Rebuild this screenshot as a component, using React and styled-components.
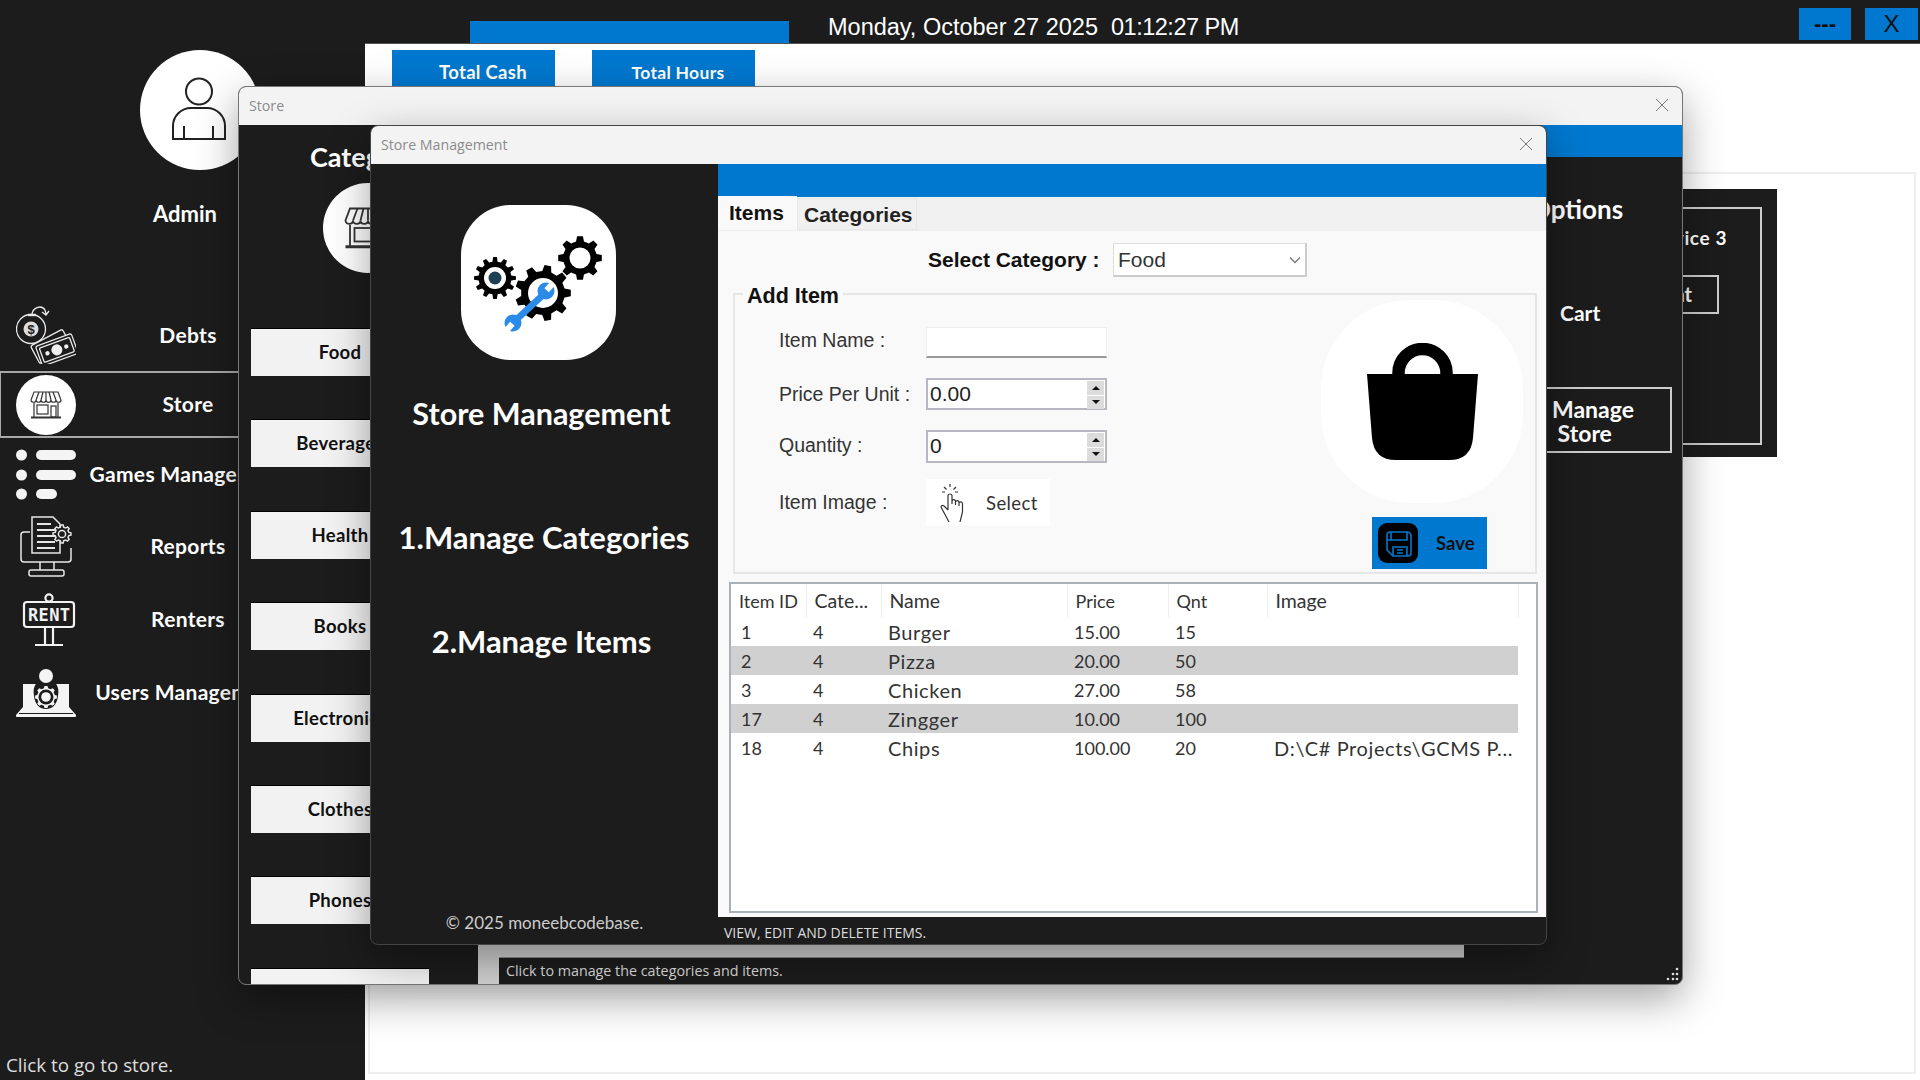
import React from 'react';
import styled, { createGlobalStyle } from 'styled-components';

const GOTHIC = '"Lato", "Open Sans", sans-serif';
const ARIAL = '"Liberation Sans", Arial, sans-serif';
const SOFT = '"Open Sans", "Noto Sans", sans-serif';
const BLUE = '#0078cf';
const DARK = '#1c1c1c';

const GlobalStyle = createGlobalStyle`
	html, body {
		margin: 0;
		padding: 0;
		background: ${DARK};
	}
	* {
		box-sizing: border-box;
	}
`;

const Desktop = styled.div`
	position: relative;
	width: 1920px;
	height: 1080px;
	overflow: hidden;
	background: ${DARK};
	display: grid;
	grid-template-columns: 365px 1fr;
	grid-template-rows: 44px 1fr;
`;

const TopBar = styled.header`
	grid-column: 1 / 3;
	display: flex;
	align-items: flex-start;
	padding-left: 470px;
`;

const TopStrip = styled.div`
	width: 319px;
	height: 23px;
	margin-top: 21px;
	background: ${BLUE};
`;

const DateText = styled.div`
	margin: 12px 0 0 39px;
	font: 23.5px/30px ${ARIAL};
	color: #fff;
	white-space: pre;
`;

const TimeText = styled.span`
	letter-spacing: -0.5px;
`;

const WinButtons = styled.div`
	display: flex;
	gap: 14px;
	margin: 8px 2px 0 auto;
`;

const WinButton = styled.div`
	width: ${(p) => (p.$wide ? 52 : 53)}px;
	height: 32px;
	background: ${BLUE};
	color: #111;
	font: ${(p) => (p.$wide ? '700 22px' : '400 24px')}/32px ${ARIAL};
	text-align: center;
`;

const Sidebar = styled.aside`
	display: flex;
	flex-direction: column;
	color: #fff;
	font-family: ${GOTHIC};
`;

const Avatar = styled.div`
	width: 120px;
	height: 120px;
	margin: 6px 0 0 140px;
	border-radius: 50%;
	background: #fff;
`;

const AdminName = styled.div`
	margin: 30px 0 0 153px;
	font-size: 22px;
	line-height: 28px;
	font-weight: 700;
`;

const Nav = styled.nav`
	margin-top: 72px;
	display: flex;
	flex-direction: column;
`;

const NavRow = styled.div`
	display: flex;
	align-items: center;
	height: ${(p) => p.$h}px;
	padding-left: 16px;
	${(p) =>
		p.$active &&
		`border: 2px solid #a8a8a8; border-right: none; border-left-width: 1px; padding-left: 15px;`}
`;

const NavIcon = styled.div`
	width: 60px;
	height: 60px;
	flex: none;
	display: flex;
	align-items: center;
	justify-content: center;
	padding-left: ${(p) => p.$shift || 0}px;
	padding-bottom: ${(p) => p.$lift || 0}px;
`;

const NavCircle = styled(NavIcon)`
	border-radius: 50%;
	background: #fff;
`;

const NavLabel = styled.span`
	width: 224px;
	padding-bottom: 3px;
	text-align: center;
	white-space: nowrap;
	font-size: 21px;
	font-weight: 700;
	letter-spacing: 0.3px;
`;

const Hint = styled.div`
	margin: auto 0 2px 6px;
	font: 18.8px/26px ${SOFT};
	color: #ddd;
`;

const Main = styled.main`
	margin-top: -1px;
	border-top: 1px solid #555;
	background: #fff;
	padding: 6px 4px 6px 3px;
	display: flex;
	flex-direction: column;
`;

const TotalTabs = styled.div`
	display: flex;
	gap: 37px;
	padding-left: 24px;
	height: 122px;
`;

const TotalTab = styled.div`
	width: 163px;
	height: 46px;
	padding-left: ${(p) => p.$pad}px;
	background: ${BLUE};
	color: #fff;
	font: 700 ${(p) => p.$size}px/45px ${GOTHIC};
	letter-spacing: 0.3px;
	text-align: center;
`;

const Panel = styled.section`
	flex: 1;
	display: flex;
	justify-content: flex-end;
	align-items: flex-start;
	padding: 15px 137px 0 0;
	border: 2px solid #eee;
`;

const DeviceCard = styled.div`
	width: 400px;
	height: 268px;
	padding: 18px 15px 12px 16px;
	background: ${DARK};
`;

const DeviceBox = styled.div`
	height: 100%;
	border: 2px solid #ccc;
	display: flex;
	flex-direction: column;
	align-items: flex-end;
	color: #fff;
	font-family: ${GOTHIC};
`;

const DeviceName = styled.div`
	margin: 18px 33px 0 0;
	font-size: 19px;
	line-height: 22px;
	font-weight: 700;
	letter-spacing: 0.6px;
`;

const DeviceAction = styled.div`
	width: 180px;
	height: 39px;
	margin: 26px 41px 0 0;
	border: 2px solid #ccc;
	padding-right: 25px;
	text-align: right;
	font-size: 20px;
	line-height: 35px;
	font-weight: 700;
`;

const Window = styled.div`
	position: absolute;
	left: ${(p) => p.$x}px;
	top: ${(p) => p.$y}px;
	width: ${(p) => p.$w}px;
	height: ${(p) => p.$h}px;
	display: flex;
	flex-direction: column;
	overflow: hidden;
	background: ${DARK};
	border-radius: 8px;
	border: 1px solid ${(p) => p.$edge};
	box-shadow: 0 14px 42px rgba(0, 0, 0, 0.36);
`;

const TitleBar = styled.div`
	flex: none;
	height: ${(p) => p.$h}px;
	display: flex;
	align-items: center;
	justify-content: space-between;
	padding: 0 13px 2px 10px;
	background: #f3f3f3;
	color: #8b8b8b;
	font: 14.2px ${SOFT};
`;

const StoreBody = styled.div`
	flex: 1;
	min-height: 0;
	display: flex;
`;

const CategoryColumn = styled.div`
	width: 239px;
	flex: none;
	overflow: hidden;
	display: flex;
	flex-direction: column;
	font-family: ${GOTHIC};
`;

const CategoryHeading = styled.div`
	margin: 16px 0 0 71px;
	color: #fff;
	font-size: 27px;
	line-height: 32px;
	font-weight: 700;
	white-space: nowrap;
`;

const CategoryCircle = styled.div`
	width: 90px;
	height: 90px;
	flex: none;
	margin: 10px 0 0 84px;
	border-radius: 50%;
	background: #fff;
	display: flex;
	align-items: center;
	justify-content: center;
`;

const CategoryList = styled.div`
	margin: 55px 0 0 12px;
	display: flex;
	flex-direction: column;
	gap: 43.4px;
`;

const CategoryButton = styled.div`
	width: 178px;
	height: 48px;
	flex: none;
	background: #f2f2f2;
	border-top: 1px solid #000;
	color: #111;
	font-size: 18.5px;
	line-height: 47px;
	font-weight: 700;
	letter-spacing: 0.3px;
	text-align: center;
	white-space: nowrap;
`;

const StoreRight = styled.div`
	flex: 1;
	display: flex;
	flex-direction: column;
`;

const BlueBar = styled.div`
	flex: none;
	height: ${(p) => p.$h}px;
	background: ${BLUE};
`;

const StoreColumns = styled.div`
	flex: 1;
	display: flex;
	min-height: 0;
`;

const MiddlePane = styled.div`
	width: 986px;
	padding-left: 21px;
	background: #cfcfcf;
	display: flex;
	flex-direction: column;
	justify-content: flex-end;
`;

const StoreStatus = styled.div`
	height: 27px;
	padding-left: 7px;
	background: ${DARK};
	border-top: 1px solid #888;
	color: #ddd;
	font: 14.3px/26px ${SOFT};
`;

const OptionsColumn = styled.div`
	flex: 1;
	display: flex;
	flex-direction: column;
	align-items: flex-start;
	color: #fff;
	font-family: ${GOTHIC};
`;

const OptionsHeading = styled.div`
	margin: 36px 0 0 66px;
	font-size: 26px;
	line-height: 32px;
	font-weight: 700;
`;

const CartLabel = styled.div`
	margin: 72px 0 0 96px;
	font-size: 21px;
	line-height: 32px;
	font-weight: 700;
`;

const ManageButton = styled.div`
	width: 158px;
	height: 66px;
	margin: 58px 0 0 50px;
	padding: 8px 0 0 36px;
	border: 2px solid #ccc;
	font-size: 23px;
	line-height: 24px;
	font-weight: 700;
	white-space: pre;
`;

const Grip = styled.svg`
	position: absolute;
	right: 2px;
	bottom: 2px;
`;

const ManageBody = styled.div`
	flex: 1;
	min-height: 0;
	display: grid;
	grid-template-columns: 347px 1fr;
`;

const ManageSide = styled.div`
	display: flex;
	flex-direction: column;
	align-items: center;
	padding: 41px 6px 11px 0;
	color: #fff;
	font-family: ${GOTHIC};
`;

const LogoTile = styled.div`
	width: 155px;
	height: 155px;
	margin-right: 6px;
	border-radius: 50px;
	background: #fff;
`;

const SideTitle = styled.div`
	margin-top: ${(p) => p.$top}px;
	padding-left: ${(p) => p.$nudge || 0}px;
	font-size: ${(p) => p.$size}px;
	line-height: 34px;
	font-weight: 700;
	white-space: nowrap;
`;

const Copyright = styled.div`
	margin-top: auto;
	padding-left: 6px;
	color: #ccc;
	font-size: 17px;
	line-height: 20px;
`;

const ManageMain = styled.div`
	display: flex;
	flex-direction: column;
	min-height: 0;
`;

const TabStrip = styled.div`
	flex: none;
	height: 34px;
	display: flex;
	align-items: flex-end;
	background: #f0f0f0;
	border-bottom: 1px solid #eee;
	font-family: ${ARIAL};
`;

const ActiveTab = styled.div`
	width: 79px;
	height: 34px;
	padding-left: 11px;
	background: #f9f9f9;
	color: #111;
	font-size: 21px;
	line-height: 33px;
	font-weight: 700;
`;

const IdleTab = styled.div`
	width: 120px;
	height: 32px;
	border: 1px solid #e8e8e8;
	padding-left: 6px;
	color: #222;
	font-size: 21px;
	line-height: 31px;
	font-weight: 700;
`;

const TabPanel = styled.div`
	flex: 1;
	min-height: 0;
	padding: 12px 8px 4px 11px;
	background: #f9f9f9;
	display: flex;
	flex-direction: column;
	font-family: ${ARIAL};
`;

const CategoryRow = styled.div`
	flex: none;
	height: 34px;
	display: flex;
	align-items: center;
	padding-left: 199px;
`;

const BoldLabel = styled.span`
	width: 185px;
	color: #111;
	font-size: 21px;
	font-weight: 700;
	white-space: nowrap;
`;

const SelectBox = styled.div`
	width: 194px;
	height: 34px;
	display: flex;
	align-items: center;
	justify-content: space-between;
	padding: 0 4px 0 4px;
	background: #fff;
	border: 1px solid #ddd;
	border-bottom: 2px solid #ccc;
	border-right: 2px solid #ccc;
	color: #333;
	font-size: 21px;
`;

const GroupBox = styled.fieldset`
	flex: none;
	height: 291.5px;
	margin: 5.5px 1px 0 4px;
	padding: 0;
	min-width: 0;
	border: 2px solid #e6e6e6;
	display: flex;
`;

const GroupLegend = styled.legend`
	margin-left: 8px;
	padding: 3px 4px 0;
	color: #111;
	font-size: 21.5px;
	line-height: 20px;
	font-weight: 700;
`;

const GroupRow = styled.div`
	width: 100%;
	display: flex;
	justify-content: space-between;
`;

const FormColumn = styled.div`
	padding: 21.5px 0 0 44px;
	display: flex;
	flex-direction: column;
	gap: 20px;
`;

const FormRow = styled.div`
	height: ${(p) => p.$h}px;
	margin-top: ${(p) => p.$shift || 0}px;
	display: flex;
	align-items: center;
`;

const FormLabel = styled.span`
	width: 147px;
	padding-bottom: ${(p) => (p.$up || 0) * 2}px;
	color: #333;
	font-size: 19.5px;
	white-space: nowrap;
`;

const TextInput = styled.div`
	width: 181px;
	height: 100%;
	background: #fff;
	border: 1px solid #eee;
	border-bottom: 2px solid #999;
`;

const NumberInput = styled.div`
	position: relative;
	width: 181px;
	height: 100%;
	padding-left: 2px;
	background: #fff;
	border: 2px solid #b8b8c4;
	color: #222;
	font-size: 21px;
	line-height: 28px;
`;

const Spinner = styled.div`
	position: absolute;
	top: 1px;
	right: 1px;
	width: 17px;
	display: flex;
	flex-direction: column;
	gap: 1px;
`;

const SpinPart = styled.div`
	height: 13.5px;
	background: #dcdcdc;
	display: flex;
	align-items: center;
	justify-content: center;
	&::after {
		content: '';
		border-left: 4px solid transparent;
		border-right: 4px solid transparent;
		${(p) => (p.$down ? 'border-top' : 'border-bottom')}: 4px solid #111;
	}
`;

const ImageButton = styled.div`
	width: 124px;
	height: 100%;
	display: flex;
	align-items: center;
	padding-left: 14px;
	background: #fff;
	color: #333;
	font: 18.5px ${GOTHIC};
	letter-spacing: 0.4px;
`;

const ImageButtonText = styled.span`
	margin-left: 20px;
`;

const BagColumn = styled.div`
	width: 214px;
	margin-top: -5.5px;
	display: flex;
	flex-direction: column;
`;

const BagTile = styled.div`
	width: 202px;
	height: 203px;
	border-radius: 44%;
	background: #fff;
	display: flex;
	align-items: center;
	justify-content: center;
`;

const SaveButton = styled.div`
	width: 115px;
	height: 52px;
	margin: 14px 0 0 51px;
	padding-left: 6px;
	background: ${BLUE};
	display: flex;
	align-items: center;
	color: #111;
	font: 700 18.5px ${GOTHIC};
`;

const SaveIcon = styled.div`
	width: 40px;
	height: 40px;
	border-radius: 9px;
	background: #000;
	margin-right: 18px;
`;

const TableFrame = styled.div`
	flex: none;
	height: 331px;
	margin-top: 8px;
	background: #fff;
	border: 2px solid #a9b0b8;
`;

const ItemTable = styled.table`
	table-layout: fixed;
	width: 787px;
	border-collapse: collapse;
	font-family: ${GOTHIC};
	font-size: 18px;
	color: #333;
`;

const HeadCell = styled.th`
	height: 33px;
	width: ${(p) => p.$w}px;
	padding: 0 0 0 8px;
	border-right: 1px solid #eee;
	font-weight: 400;
	font-size: ${(p) => (p.$wide ? 19.5 : 18)}px;
	text-align: left;
	white-space: nowrap;
`;

const BodyRow = styled.tr`
	background: ${(p) => (p.$alt ? '#d0d0d0' : '#fff')};
`;

const BodyCell = styled.td`
	height: 29px;
	padding: 0 0 0 ${(p) => (p.$first ? 10 : 7)}px;
	font-size: ${(p) => (p.$wide ? 20 : 18)}px;
	letter-spacing: ${(p) => (p.$wide ? 0.6 : 0)}px;
	white-space: nowrap;
	overflow: hidden;
`;

const ManageStatus = styled.div`
	flex: none;
	height: 27px;
	padding-left: 6px;
	color: #ddd;
	font: 14px/31px ${SOFT};
`;

const CloseIcon = () => (
	<svg width='14' height='14' viewBox='0 0 14 14'>
		<path d='M1 1l12 12M13 1L1 13' stroke='#777' strokeWidth='1' fill='none' />
	</svg>
);

const gearPath = (cx, cy, r, root, teeth) => {
	const step = (Math.PI * 2) / teeth;
	const at = (rad, a) =>
		`${(cx + rad * Math.cos(a)).toFixed(2)} ${(cy + rad * Math.sin(a)).toFixed(2)}`;
	let d = '';
	for (let i = 0; i < teeth; i++) {
		const a = i * step;
		d += `${i ? 'L' : 'M'}${at(root, a - step * 0.3)}L${at(r, a - step * 0.17)}L${at(r, a + step * 0.17)}L${at(root, a + step * 0.3)}`;
	}
	return d + 'Z';
};

const UserIcon = () => (
	<svg width='120' height='120' viewBox='0 0 120 120' fill='none' stroke='#222' strokeWidth='2'>
		<circle cx='59' cy='41.5' r='13' />
		<path d='M33 89V76a18 18 0 0 1 18-18h16a18 18 0 0 1 18 18v13z' />
		<path d='M44 76v13M73 76v13' />
	</svg>
);

const ShopIcon = ({ size = 32 }) => (
	<svg width={size} height={(size * 28) / 32} viewBox='0 0 32 28' fill='none' stroke='#333' strokeWidth='1.2'>
		<path d='M4 1h24l3 8c0 3-5 3-5 0 0 3-5 3-5 0 0 3-5 3-5 0 0 3-5 3-5 0 0 3-5 3-5 0 0 3-5 3-5 0z' />
		<path d='M9 1L6 9M13 1l-2 8M16 1v8M19 1l2 8M23 1l3 8' />
		<path d='M4 12v14M28 12v14' />
		<path d='M1 26.5h30' strokeWidth='2' />
		<rect x='7' y='14' width='11' height='9' />
		<rect x='21' y='15' width='5' height='11' />
	</svg>
);

const DebtIcon = () => (
	<svg width='60' height='60' viewBox='0 0 60 60' fill='none' stroke='#e8e8e8' strokeWidth='1.3'>
		<circle cx='15' cy='25' r='14.5' />
		<circle cx='15' cy='25' r='7.5' fill='#ddd' stroke='none' />
		<text x='15' y='30' textAnchor='middle' fontSize='13' fontWeight='700' fill='#222' stroke='none' fontFamily='Liberation Sans'>
			$
		</text>
		<path d='M16 11c0-7 9-11 13-5l1 4M26 8l4 3 3-4' />
		<path d='M12 11h8' strokeWidth='2.4' />
		<g transform='rotate(-28 36 42)'>
			<rect x='17' y='32' width='36' height='20' rx='2' fill={DARK} />
		</g>
		<g transform='rotate(-20 42 46)'>
			<rect x='22' y='35' width='38' height='21' rx='2' fill={DARK} />
			<rect x='25' y='38' width='32' height='15' rx='1' />
			<circle cx='41' cy='45.5' r='5.5' fill='#eee' stroke='none' />
			<circle cx='31' cy='45.5' r='2.2' fill='#eee' stroke='none' />
			<circle cx='51' cy='45.5' r='2.2' fill='#eee' stroke='none' />
		</g>
	</svg>
);

const MenuIcon = () => (
	<svg width='60' height='52' viewBox='0 0 60 52' fill='#f4f4f4'>
		<circle cx='5.5' cy='6' r='5.5' />
		<rect x='20' y='1' width='40' height='10' rx='5' />
		<circle cx='5.5' cy='26' r='5.5' />
		<rect x='20' y='21' width='40' height='10' rx='5' />
		<circle cx='5.5' cy='45' r='5.5' />
		<rect x='20' y='40' width='21' height='10' rx='5' />
	</svg>
);

const ReportIcon = () => (
	<svg width='58' height='62' viewBox='0 0 58 62' fill='none' stroke='#e6e6e6' strokeWidth='1.5'>
		<path d='M12 16H6a3 3 0 0 0-3 3v24a3 3 0 0 0 3 3h44a3 3 0 0 0 3-3V32' />
		<path d='M22 46v8M36 46v8' />
		<rect x='11' y='54' width='35' height='6' rx='2' />
		<path d='M14 1h21l7 7v29H14z' fill={DARK} />
		<path d='M19 8h14M19 14h18M19 20h18M19 26h18M19 32h18' strokeWidth='1.8' />
		<path d={gearPath(44, 18, 9, 7, 8)} fill={DARK} />
		<circle cx='44' cy='18' r='3.6' />
	</svg>
);

const RentIcon = () => (
	<svg width='54' height='54' viewBox='0 0 54 54' fill='none' stroke='#f2f2f2' strokeWidth='2.2'>
		<circle cx='27' cy='5' r='3.6' />
		<rect x='2' y='9' width='50' height='25' rx='3' fill={DARK} />
		<text x='27' y='28' textAnchor='middle' fontSize='17' fontWeight='700' fill='#f2f2f2' stroke='none' fontFamily='DejaVu Sans Mono' textLength='42'>
			RENT
		</text>
		<path d='M23 34v17M31 34v17M13 52h28' />
	</svg>
);

const UsersIcon = () => (
	<svg width='60' height='50' viewBox='0 0 60 50' fill='none'>
		<rect x='7' y='16' width='46' height='26' fill='#f4f4f4' />
		<path d='M7 39L0 47a1.5 1.5 0 0 0 1 2h58a1.5 1.5 0 0 0 1-2l-7-8z' fill='#f4f4f4' />
		<path d='M3 45.5h54' stroke={DARK} strokeWidth='1' />
		<path d='M21 14c-3 5-4 7-3 14 1 9 6 13 12 13s11-4 12-13c1-7 0-9-3-14z' fill={DARK} />
		<path d={gearPath(30, 29, 11, 9, 8)} fill='#f4f4f4' />
		<circle cx='30' cy='29' r='7.5' fill={DARK} />
		<circle cx='30' cy='29' r='4.8' fill='#f4f4f4' />
		<circle cx='30' cy='8' r='7' fill='#f4f4f4' />
	</svg>
);

const LogoArt = () => (
	<svg width='155' height='155' viewBox='0 0 155 155'>
		<path d={gearPath(34, 73, 21, 16.5, 12)} fill='#000' />
		<circle cx='34' cy='73' r='11' fill='#fff' />
		<circle cx='34' cy='73' r='6.5' fill='#1f3f55' />
		<path d={gearPath(119, 53, 22, 17, 8)} fill='#000' />
		<circle cx='119' cy='53' r='10.5' fill='#fff' />
		<path d={gearPath(82, 88, 28, 22, 9)} fill='#000' />
		<circle cx='82' cy='88' r='15' fill='#fff' />
		<path d='M83 89L55 115' stroke='#2a8ce8' strokeWidth='6.5' />
		<circle cx='85' cy='86' r='8.5' fill='#2a8ce8' />
		<polygon points='83.4,83.3 87.9,87.2 94.5,79.7 90,75.8' fill='#fff' />
		<circle cx='52' cy='118' r='8.5' fill='#2a8ce8' />
		<polygon points='53.6,120.7 49.1,116.8 42.5,124.3 47,128.2' fill='#fff' />
	</svg>
);

const BagIcon = () => (
	<svg width='111' height='117' viewBox='0 0 111 117'>
		<path d='M31.5 33v-3a24 24 0 0 1 48 0v3' fill='none' stroke='#000' strokeWidth='12.5' />
		<path d='M0 31h111l-5 64q-2 22-24 22H29q-22 0-24-22z' fill='#000' />
	</svg>
);

const HandIcon = () => (
	<svg width='26' height='38' viewBox='0 0 26 38' fill='none' stroke='#333' strokeWidth='1.2'>
		<path d='M10 0v3M4 3l2.5 2.5M16 3l-2.5 2.5M2 8h3M15 8h3' />
		<path d='M8 26V12a2 2 0 0 1 4 0v8M12 17a1.8 1.8 0 0 1 3.5 0v4M15.5 18a1.8 1.8 0 0 1 3.5 0v4M19 19a1.8 1.8 0 0 1 3.5.5V28L20 38M8 26l-4-4c-2-1.5-3.5.5-2.5 2L9 38' />
	</svg>
);

const FloppyIcon = () => (
	<svg width='40' height='40' viewBox='0 0 40 40' fill='none' stroke={BLUE} strokeWidth='1.6'>
		<path d='M12 9h17a4 4 0 0 1 4 4v17a3 3 0 0 1-3 3H15l-6-6V12a3 3 0 0 1 3-3z' />
		<path d='M13 9v8h16V9M9 17h4' />
		<path d='M15 33v-9h14v9' />
		<path d='M19 27h6M19 30h6' />
	</svg>
);

const CHEVRON = (
	<svg width='12' height='8' viewBox='0 0 12 8' fill='none' stroke='#777' strokeWidth='1.3'>
		<path d='M1 1.5l5 5 5-5' />
	</svg>
);

// the last button only peeks out under the window edge, its label is not visible
const CATEGORIES = ['Food', 'Beverages', 'Health', 'Books', 'Electronics', 'Clothes', 'Phones', ''];

const COLUMNS = [
	['Item ID', 75, false],
	['Cate...', 75, true],
	['Name', 186, true],
	['Price', 101, false],
	['Qnt', 99, false],
	['Image', 251, true],
];

const ITEMS = [
	['1', '4', 'Burger', '15.00', '15', ''],
	['2', '4', 'Pizza', '20.00', '50', ''],
	['3', '4', 'Chicken', '27.00', '58', ''],
	['17', '4', 'Zingger', '10.00', '100', ''],
	['18', '4', 'Chips', '100.00', '20', 'D:\\C# Projects\\GCMS P...'],
];

const NumberField = ({ value }) => (
	<NumberInput>
		{value}
		<Spinner>
			<SpinPart />
			<SpinPart $down />
		</Spinner>
	</NumberInput>
);

const App = () => {
	return (
		<Desktop>
			<GlobalStyle />
			<TopBar>
				<TopStrip />
				<DateText>
					Monday, October 27 2025  <TimeText>01:12:27 PM</TimeText>
				</DateText>
				<WinButtons>
					<WinButton $wide>---</WinButton>
					<WinButton>X</WinButton>
				</WinButtons>
			</TopBar>

			<Sidebar>
				<Avatar>
					<UserIcon />
				</Avatar>
				<AdminName>Admin</AdminName>
				<Nav>
					<NavRow $h={71}>
						<NavIcon $lift={3}>
							<DebtIcon />
						</NavIcon>
						<NavLabel>Debts</NavLabel>
					</NavRow>
					<NavRow $h={67} $active>
						<NavCircle>
							<ShopIcon />
						</NavCircle>
						<NavLabel>Store</NavLabel>
					</NavRow>
					<NavRow $h={74}>
						<NavIcon>
							<MenuIcon />
						</NavIcon>
						<NavLabel>Games Management</NavLabel>
					</NavRow>
					<NavRow $h={70}>
						<NavIcon $shift={2}>
							<ReportIcon />
						</NavIcon>
						<NavLabel>Reports</NavLabel>
					</NavRow>
					<NavRow $h={76}>
						<NavIcon $shift={6}>
							<RentIcon />
						</NavIcon>
						<NavLabel>Renters</NavLabel>
					</NavRow>
					<NavRow $h={70}>
						<NavIcon>
							<UsersIcon />
						</NavIcon>
						<NavLabel>Users Management</NavLabel>
					</NavRow>
				</Nav>
				<Hint>Click to go to store.</Hint>
			</Sidebar>

			<Main>
				<TotalTabs>
					<TotalTab $pad={19} $size={18.5}>Total Cash</TotalTab>
					<TotalTab $pad={9} $size={17.5}>Total Hours</TotalTab>
				</TotalTabs>
				<Panel>
					<DeviceCard>
						<DeviceBox>
							<DeviceName>Device 3</DeviceName>
							<DeviceAction>Rent</DeviceAction>
						</DeviceBox>
					</DeviceCard>
				</Panel>
			</Main>

			<Window $x={238} $y={86} $w={1445} $h={899} $edge='#777'>
				<TitleBar $h={38}>
					Store
					<CloseIcon />
				</TitleBar>
				<StoreBody>
					<CategoryColumn>
						<CategoryHeading>Categories</CategoryHeading>
						<CategoryCircle>
							<ShopIcon size={48} />
						</CategoryCircle>
						<CategoryList>
							{CATEGORIES.map((name, i) => (
								<CategoryButton key={i}>{name}</CategoryButton>
							))}
						</CategoryList>
					</CategoryColumn>
					<StoreRight>
						<BlueBar $h={32} />
						<StoreColumns>
							<MiddlePane>
								<StoreStatus>Click to manage the categories and items.</StoreStatus>
							</MiddlePane>
							<OptionsColumn>
								<OptionsHeading>Options</OptionsHeading>
								<CartLabel>Cart</CartLabel>
								<ManageButton>{'Manage\n Store'}</ManageButton>
							</OptionsColumn>
						</StoreColumns>
					</StoreRight>
				</StoreBody>
				<Grip width='16' height='16' viewBox='0 0 16 16' fill='#ddd'>
					<circle cx='13' cy='3' r='1.3' />
					<circle cx='9' cy='8' r='1.3' />
					<circle cx='13' cy='8' r='1.3' />
					<circle cx='4' cy='13' r='1.3' />
					<circle cx='9' cy='13' r='1.3' />
					<circle cx='13' cy='13' r='1.3' />
				</Grip>
			</Window>

			<Window $x={370} $y={125} $w={1177} $h={820} $edge='#444'>
				<TitleBar $h={38}>
					Store Management
					<CloseIcon />
				</TitleBar>
				<ManageBody>
					<ManageSide>
						<LogoTile>
							<LogoArt />
						</LogoTile>
						<SideTitle $top={36} $size={30.5}>Store Management</SideTitle>
						<SideTitle $top={90} $size={31} $nudge={5}>1.Manage Categories</SideTitle>
						<SideTitle $top={70} $size={31}>2.Manage Items</SideTitle>
						<Copyright>© 2025 moneebcodebase.</Copyright>
					</ManageSide>
					<ManageMain>
						<BlueBar $h={33} />
						<TabStrip>
							<ActiveTab>Items</ActiveTab>
							<IdleTab>Categories</IdleTab>
						</TabStrip>
						<TabPanel>
							<CategoryRow>
								<BoldLabel>Select Category :</BoldLabel>
								<SelectBox>
									Food
									{CHEVRON}
								</SelectBox>
							</CategoryRow>
							<GroupBox>
								<GroupLegend>Add Item</GroupLegend>
								<GroupRow>
									<FormColumn>
										<FormRow $h={31}>
											<FormLabel $up={2}>Item Name :</FormLabel>
											<TextInput />
										</FormRow>
										<FormRow $h={32}>
											<FormLabel>Price Per Unit :</FormLabel>
											<NumberField value='0.00' />
										</FormRow>
										<FormRow $h={33}>
											<FormLabel $up={1}>Quantity :</FormLabel>
											<NumberField value='0' />
										</FormRow>
										<FormRow $h={47} $shift={-4}>
											<FormLabel>Item Image :</FormLabel>
											<ImageButton>
												<HandIcon />
												<ImageButtonText>Select</ImageButtonText>
											</ImageButton>
										</FormRow>
									</FormColumn>
									<BagColumn>
										<BagTile>
											<BagIcon />
										</BagTile>
										<SaveButton>
											<SaveIcon>
												<FloppyIcon />
											</SaveIcon>
											Save
										</SaveButton>
									</BagColumn>
								</GroupRow>
							</GroupBox>
							<TableFrame>
								<ItemTable>
									<thead>
										<tr>
											{COLUMNS.map(([label, w, wide]) => (
												<HeadCell key={label} $w={w} $wide={wide}>
													{label}
												</HeadCell>
											))}
										</tr>
									</thead>
									<tbody>
										{ITEMS.map((row, i) => (
											<BodyRow key={row[0]} $alt={i % 2 === 1}>
												{row.map((cell, j) => (
													<BodyCell key={j} $first={j === 0} $wide={j === 2 || j === 5}>
														{cell}
													</BodyCell>
												))}
											</BodyRow>
										))}
									</tbody>
								</ItemTable>
							</TableFrame>
						</TabPanel>
						<ManageStatus>VIEW, EDIT AND DELETE ITEMS.</ManageStatus>
					</ManageMain>
				</ManageBody>
			</Window>
		</Desktop>
	);
};

export default App;
